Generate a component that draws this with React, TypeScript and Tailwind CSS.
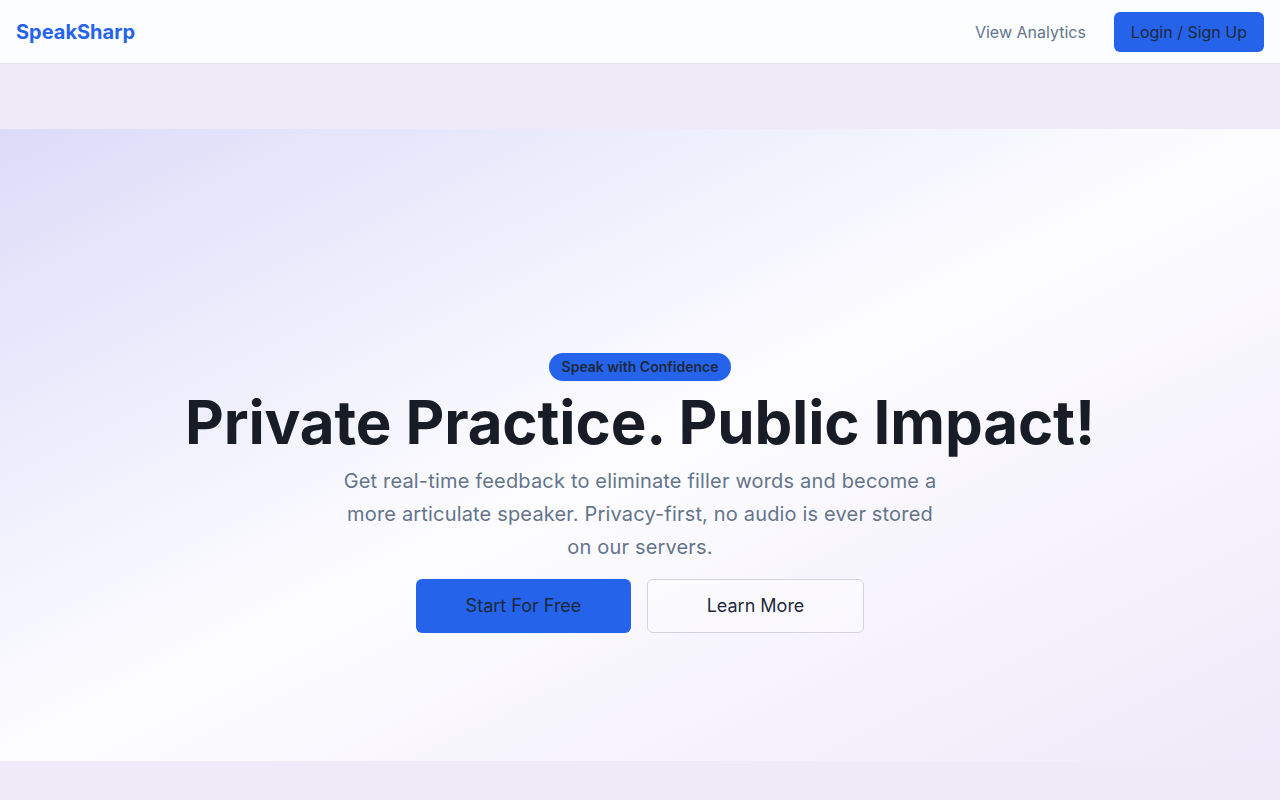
export default function App() {
  return (
    <div className="min-h-screen bg-[#efe9f8]" style={{ fontFamily: 'Inter, "Noto Sans", sans-serif' }}>
      <header className="h-16 bg-[#fcfdff] border-b border-[#e2e4ee] flex items-center justify-between px-4">
        <div className="text-xl font-bold text-[#2563eb]">SpeakSharp</div>
        <div className="flex items-center gap-7">
          <span className="text-base text-[#64748b]">View Analytics</span>
          <button className="h-10 px-[17px] rounded-md bg-[#2563eb] text-base text-[#1e293b]">Login / Sign Up</button>
        </div>
      </header>
      <main className="pt-[65px]">
        <section className="h-[632px] bg-gradient-to-br from-[#dcdcf9] via-[#fdfdff] to-[#efe9f9] flex flex-col items-center pt-[224px]">
          <span className="h-7 px-[13px] rounded-full bg-[#2563eb] text-sm font-semibold text-[#1e293b] flex items-center">Speak with Confidence</span>
          <h1 className="text-6xl font-bold tracking-[-0.13px] text-[#171c26] leading-none pt-[11px] pb-[5px]">Private Practice. Public Impact!</h1>
          <p className="mt-2 max-w-[610px] text-center text-xl leading-[33px] tracking-[0.17px] text-[#64748b]">
            Get real-time feedback to eliminate filler words and become a more articulate speaker. Privacy-first, no audio is ever stored on our servers.
          </p>
          <div className="mt-[15px] flex gap-4">
            <button className="w-[215px] h-[54px] rounded-md bg-[#2563eb] text-lg text-[#1e293b]">Start For Free</button>
            <button className="w-[217px] h-[54px] rounded-md border border-[#d4d4dc] bg-white/40 text-lg text-[#1e293b]">Learn More</button>
          </div>
        </section>
      </main>
    </div>
  );
}
